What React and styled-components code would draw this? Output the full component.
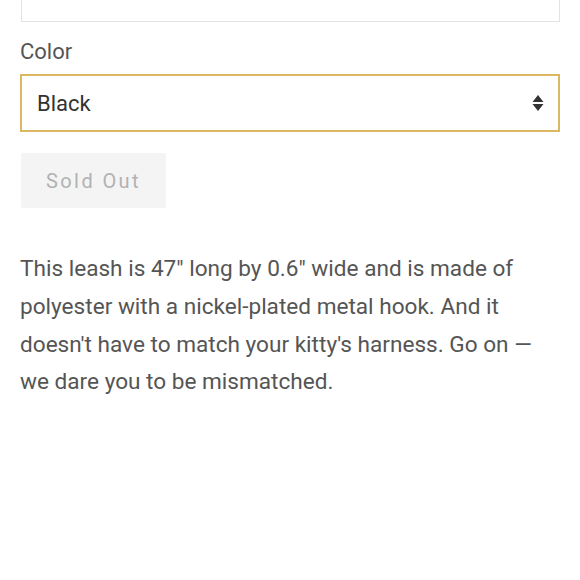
import styled, { createGlobalStyle } from 'styled-components';

const GlobalStyle = createGlobalStyle`
  body {
    margin: 0;
    background: #fff;
    font-family: Roboto, 'Noto Sans', sans-serif;
  }
`;

const Page = styled.div`
  padding: 0 20px;
  width: 580px;
  box-sizing: border-box;
`;

const QuantityBox = styled.div`
  border: 1px solid #e3e3e3;
  border-top: none;
  height: 21px;
  margin-left: 1px;
`;

const Label = styled.label`
  color: #555;
  display: block;
  font-size: 22px;
  line-height: 30px;
  margin: 15px 0 7px;
`;

const SelectBox = styled.div`
  align-items: center;
  border: 2px solid #dcb863;
  box-sizing: border-box;
  display: flex;
  height: 58px;
  justify-content: space-between;
  padding: 0 14px 0 15px;
`;

const SelectValue = styled.span`
  color: #333;
  font-size: 22px;
`;

const Arrows = () => (
  <svg width="12" height="18" viewBox="0 0 12 18">
    <path d="M6 1 L11.5 8 H0.5 Z" fill="#333" />
    <path d="M6 17 L11.5 10 H0.5 Z" fill="#333" />
  </svg>
);

const Button = styled.button`
  background: #f4f4f4;
  border: none;
  border-radius: 2px;
  color: #b2b2b2;
  cursor: default;
  font-family: Roboto, sans-serif;
  font-size: 20px;
  height: 55px;
  letter-spacing: 2.4px;
  margin: 21px 0 0 1px;
  width: 145px;
`;

const Description = styled.p`
  color: #555;
  font-size: 22.6px;
  line-height: 37.8px;
  margin: 42px 0 0;
`;

const App = () => {
  return (
    <>
      <GlobalStyle />
      <Page>
        <QuantityBox />
        <Label>Color</Label>
        <SelectBox>
          <SelectValue>Black</SelectValue>
          <Arrows />
        </SelectBox>
        <Button>Sold Out</Button>
        <Description>
          This leash is 47" long by 0.6" wide and is made of polyester with a
          nickel-plated metal hook. And it doesn't have to match your kitty's
          harness. Go on — we dare you to be mismatched.
        </Description>
      </Page>
    </>
  );
};

export default App;
